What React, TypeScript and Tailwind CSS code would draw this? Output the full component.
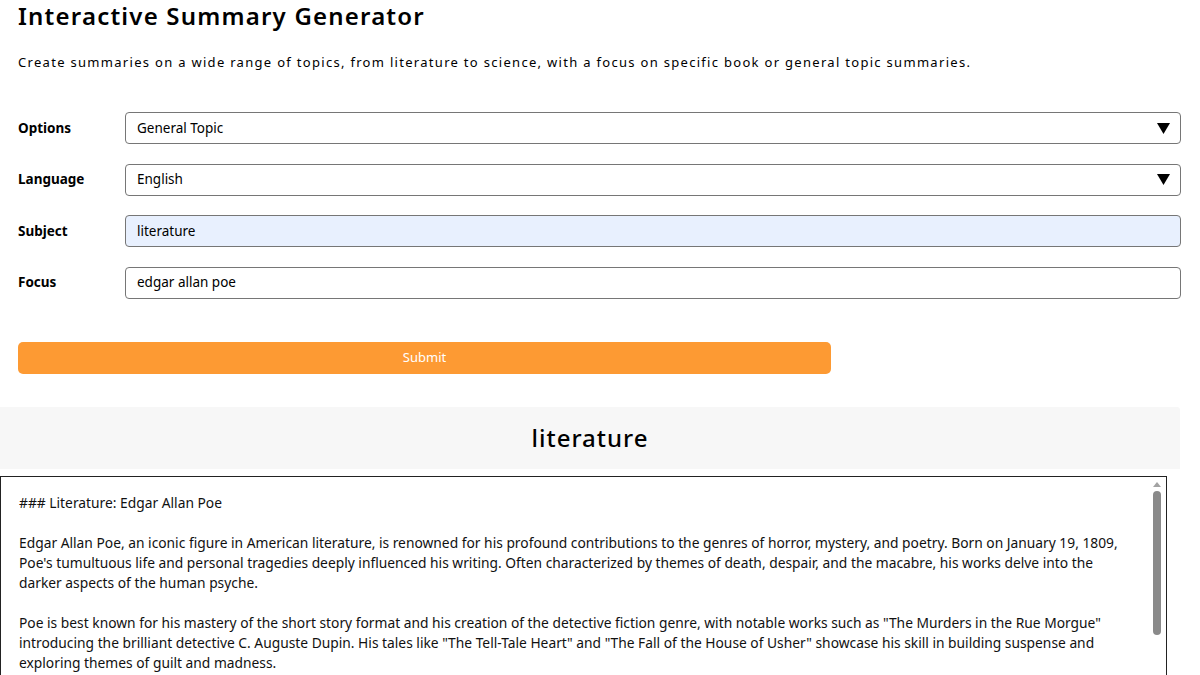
import React from "react";

const fields = [
  { label: "Options", value: "General Topic", kind: "select" },
  { label: "Language", value: "English", kind: "select" },
  { label: "Subject", value: "literature", kind: "filled" },
  { label: "Focus", value: "edgar allan poe", kind: "input" },
];

const paragraphs = [
  "### Literature: Edgar Allan Poe",
  "Edgar Allan Poe, an iconic figure in American literature, is renowned for his profound contributions to the genres of horror, mystery, and poetry. Born on January 19, 1809, Poe's tumultuous life and personal tragedies deeply influenced his writing. Often characterized by themes of death, despair, and the macabre, his works delve into the darker aspects of the human psyche.",
  "Poe is best known for his mastery of the short story format and his creation of the detective fiction genre, with notable works such as \"The Murders in the Rue Morgue\" introducing the brilliant detective C. Auguste Dupin. His tales like \"The Tell-Tale Heart\" and \"The Fall of the House of Usher\" showcase his skill in building suspense and exploring themes of guilt and madness.",
];

export default function App() {
  return (
    <div
      className="w-[1200px] h-[675px] overflow-hidden bg-white text-black"
      style={{ fontFamily: '"Noto Sans", "Open Sans", sans-serif' }}
    >
      {/* Header */}
      <div className="px-[18px] pr-[19px]">
        <h1 className="text-[24px] font-semibold tracking-[1.2px] leading-[32px]">
          Interactive Summary Generator
        </h1>
        <p className="mt-[15px] text-[13px] tracking-[1.3px] leading-[30px]">
          Create summaries on a wide range of topics, from literature to science, with a focus on specific book or general topic summaries.
        </p>

        {/* Form */}
        <div className="mt-[35px] flex flex-col gap-[19.5px]">
          {fields.map((f) => (
            <div key={f.label} className="flex items-center">
              <label className="w-[107px] text-[13.5px] font-bold">{f.label}</label>
              <div
                className={
                  f.kind === "filled"
                    ? "flex-1 h-[32px] flex items-center justify-between rounded-[4px] border border-[#767676] bg-[#e8f0fe] pl-[11px] pr-[10px]"
                    : "flex-1 h-[32px] flex items-center justify-between rounded-[4px] border border-[#767676] bg-white pl-[11px] pr-[10px]"
                }
              >
                <span className="text-[13.5px]">{f.value}</span>
                {f.kind === "select" && (
                  <svg width="13" height="11" viewBox="0 0 13 11">
                    <path d="M0 0 H13 L6.5 11 Z" fill="#000" />
                  </svg>
                )}
              </div>
            </div>
          ))}
        </div>

        <button className="mt-[43px] w-[813px] h-[32px] rounded-[5px] bg-[#fd9a33] text-white text-[13px]">
          Submit
        </button>
      </div>

      {/* Result */}
      <div className="mt-[33px] w-[1180px] h-[62px] bg-[#f7f7f7] rounded-tr-[3px] flex items-center justify-center">
        <h2 className="text-[24px] font-medium tracking-[1px]">literature</h2>
      </div>
      <div className="mt-[7px] w-[1167px] h-[210px] border border-[#222] flex overflow-hidden">
        <div className="flex-1 pl-[18px] pr-[20px] pt-[16px] text-[13.8px] leading-[20px] text-[#111] flex flex-col gap-[20px]">
          {paragraphs.map((p, i) => (
            <p key={i}>{p}</p>
          ))}
        </div>
        <div className="w-[14px] flex flex-col items-center pt-[5px] mr-[2px]">
          <svg width="8" height="5" viewBox="0 0 8 5">
            <path d="M0 5 L4 0 L8 5 Z" fill="#a3a3a3" />
          </svg>
          <div className="mt-[4px] w-[8px] h-[144px] rounded-full bg-[#8a8a8a]" />
        </div>
      </div>
    </div>
  );
}
